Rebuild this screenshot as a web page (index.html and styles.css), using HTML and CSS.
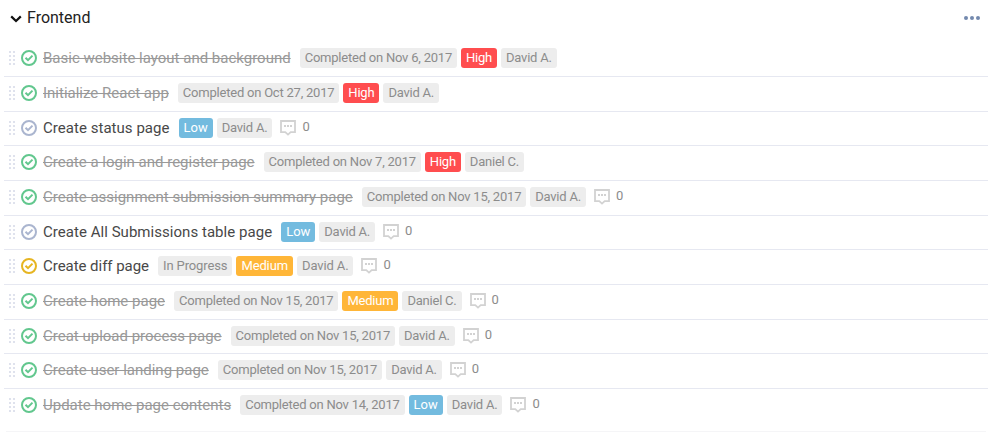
FILE: index.html
```html
<!DOCTYPE html>
<html lang="en">
<head>
<meta charset="utf-8">
<title>Frontend</title>
<link rel="stylesheet" href="styles.css">
</head>
<body>
<svg class="defs" width="0" height="0" aria-hidden="true">
  <symbol id="grip" viewBox="0 0 6 14"><path d="M0 1h2M4 1h2M0 5h2M4 5h2M0 9h2M4 9h2M0 13h2M4 13h2" stroke="currentColor" stroke-width="2"/></symbol>
  <symbol id="check" viewBox="0 0 16 16"><circle cx="8" cy="8" r="7" fill="none" stroke="currentColor" stroke-width="2"/><path d="M4.5 7.7l2.5 2.5 4.5-4.6" fill="none" stroke="currentColor" stroke-width="2"/></symbol>
  <symbol id="comment" viewBox="0 0 16 16"><path d="M1 1h14v11.2h-4.3L8 14.6l-2.7-2.4H1z" fill="none" stroke="currentColor" stroke-width="1.8"/><path d="M4 6h2M7 6h2M10 6h2" stroke="currentColor" stroke-width="2"/></symbol>
</svg>
<header class="header">
  <svg class="chevron" width="12" height="8" viewBox="0 0 12 8"><path d="M1.2 1.4L6 6l4.8-4.6" fill="none" stroke="currentColor" stroke-width="2.2"/></svg>
  <h1 class="heading">Frontend</h1>
  <svg class="more" width="16" height="4" viewBox="0 0 16 4"><circle cx="2" cy="2" r="2"/><circle cx="8" cy="2" r="2"/><circle cx="14" cy="2" r="2"/></svg>
</header>
<ul class="tasks" id="tasks"></ul>
<script src="tasks.js"></script>
</body>
</html>
```
FILE: styles.css
```css
* { box-sizing: border-box; }
body { margin: 0; height: 432px; overflow: hidden; background: #fff; font-family: Roboto, "Liberation Sans", sans-serif; }
.defs { display: block; height: 0; }
.header { display: flex; align-items: center; height: 36px; margin-bottom: 6.3px; padding: 0 15px 0 10px; }
.chevron { color: #111; margin-top: 2px; }
.heading { margin: 0 auto 0 5px; font-size: 16px; font-weight: 400; line-height: 20px; color: #222; }
.more { fill: #7389ae; }
.tasks { list-style: none; margin: 0 7px 0 4px; padding: 0; }
.task { display: flex; align-items: center; height: 34.66px; padding: 0 0 1.4px 5px; border-bottom: 1px solid #e6e8f1; }
.task:last-child { height: 43px; padding-bottom: 9.7px; margin: 0 2px; padding-left: 3px; border-color: #f5f5f7; }
.grip { width: 6px; height: 14px; margin-right: 6px; color: #dfe2ed; }
.check { width: 16px; height: 16px; margin-right: 6px; color: #aab5cf; }
.done .check { color: #62c78e; }
.progress .check { color: #e6b522; }
.title { font-size: 15px; line-height: 20px; color: #484848; margin-right: 9px; white-space: nowrap; }
.open .title { letter-spacing: .04px; }
.progress .title { letter-spacing: -.04px; }
.done .title { color: #999; text-decoration: line-through; }
.tag { height: 20px; padding: 0 5px; margin-right: 4px; border-radius: 3px; background: #ededed; color: #8c8c8c; font-size: 13px; line-height: 20px; letter-spacing: -.22px; white-space: nowrap; }
.progress .tag { letter-spacing: -.12px; }
.high { background: #ff4d4f; color: #fff; }
.medium { background: #ffb638; color: #fff; }
.tag.low { background: #73bbdf; color: #fff; letter-spacing: 0; }
.comment { width: 16px; height: 16px; margin-left: 4px; color: #d2d2d2; }
.count { margin-left: 6px; font-size: 13px; line-height: 20px; color: #8c8c8c; position: relative; top: -1px; }
```
FILE: tasks.js
```js
const tasks = [
  ["done", "Basic website layout and background", ["Completed on Nov 6, 2017", "High", "David A."], false],
  ["done", "Initialize React app", ["Completed on Oct 27, 2017", "High", "David A."], false],
  ["open", "Create status page", ["Low", "David A."], true],
  ["done", "Create a login and register page", ["Completed on Nov 7, 2017", "High", "Daniel C."], false],
  ["done", "Create assignment submission summary page", ["Completed on Nov 15, 2017", "David A."], true],
  ["open", "Create All Submissions table page", ["Low", "David A."], true],
  ["progress", "Create diff page", ["In Progress", "Medium", "David A."], true],
  ["done", "Create home page", ["Completed on Nov 15, 2017", "Medium", "Daniel C."], true],
  ["done", "Creat upload process page", ["Completed on Nov 15, 2017", "David A."], true],
  ["done", "Create user landing page", ["Completed on Nov 15, 2017", "David A."], true],
  ["done", "Update home page contents", ["Completed on Nov 14, 2017", "Low", "David A."], true]
];
const priorities = { High: "high", Medium: "medium", Low: "low" };
const icon = name => `<svg class="${name}"><use href="#${name}"/></svg>`;
document.getElementById("tasks").innerHTML = tasks.map(([state, title, tags, comments]) =>
  `<li class="task ${state}">${icon("grip")}${icon("check")}<span class="title">${title}</span>` +
  tags.map(t => `<span class="tag ${priorities[t] || ""}">${t}</span>`).join("") +
  (comments ? `${icon("comment")}<span class="count">0</span>` : "") + `</li>`
).join("");
```
